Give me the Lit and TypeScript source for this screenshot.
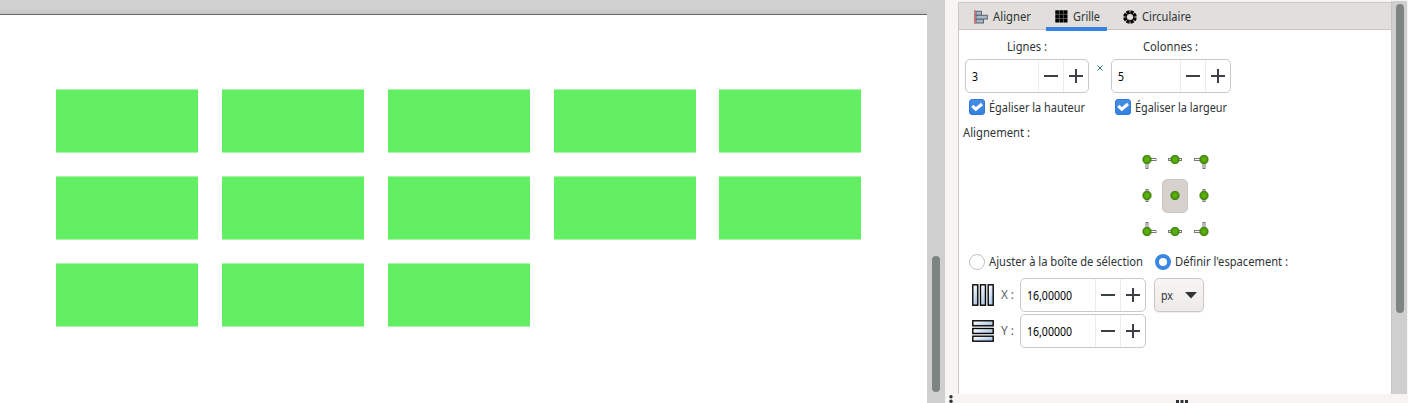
import { LitElement, html, svg, css } from "lit";
import { customElement, property } from "lit/decorators.js";

/** Condensed interface label fitted to a fixed advance width. */
@customElement("ui-label")
class UiLabel extends LitElement {
  @property() text = "";
  @property({ type: Number }) w = 40;
  static styles = css`
    :host { display: block; flex: none; color: #2e3436; }
    svg { display: block; height: 18px; overflow: visible; }
    text { font: 12px "Noto Sans", "Open Sans", sans-serif; fill: currentColor; }
  `;
  render() {
    return html`<svg width=${this.w} height="18">
      <text x="0" y="13" textLength=${this.w} lengthAdjust="spacingAndGlyphs">${this.text}</text>
    </svg>`;
  }
}

@customElement("spin-button")
class SpinButton extends LitElement {
  @property() value = "";
  @property({ type: Number }) w = 6;
  static styles = css`
    :host { display: flex; box-sizing: border-box; height: 34px; border: 1px solid #cdc7c2; border-radius: 5px; background: #fff; flex: none; }
    .value { flex: 1; padding: 8px 0 0 6px; }
    .value ui-label { color: #000; }
    .step { width: 24px; border-left: 1px solid #edebe9; display: flex; }
    svg { display: block; margin: 9px 0 0 5px; }
    path { fill: #3b4143; }
  `;
  render() {
    return html`
      <div class="value"><ui-label .text=${this.value} .w=${this.w}></ui-label></div>
      <div class="step"><svg width="14" height="14"><path d="M0 6h14v2H0z" /></svg></div>
      <div class="step"><svg width="14" height="14"><path d="M0 6h6V0h2v6h6v2H8v6H6V8H0z" /></svg></div>
    `;
  }
}

@customElement("shape-canvas")
class ShapeCanvas extends LitElement {
  static styles = css`
    :host { display: flex; flex-direction: column; width: 927px; height: 403px; background: #fff; }
    .ruler { box-sizing: border-box; height: 15px; background: linear-gradient(#d1d1d1 60%, #c6c6c6); border-bottom: 1px solid #666; }
    .shapes { display: grid; grid-template-columns: repeat(5, 142px); grid-auto-rows: 64px; gap: 23px 23.86px; padding: 74px 0 0 56px; }
    .shape { box-sizing: border-box; background: #63ef63; border: solid #a6f6a6; border-width: 1px 0; }
  `;
  render() {
    return html`<div class="ruler"></div>
      <div class="shapes">${Array.from({ length: 13 }, () => html`<div class="shape"></div>`)}</div>`;
  }
}

const check = html`<svg class="check" width="16" height="16" viewBox="0 0 16 16">
  <defs><linearGradient id="c" x2="0" y2="1"><stop stop-color="#478fe6" /><stop offset="1" stop-color="#3280e0" /></linearGradient></defs>
  <rect x=".5" y=".5" width="15" height="15" rx="2.5" fill="url(#c)" stroke="#2f7ad8" />
  <path d="M3.3 6.8 6.8 10.2 13 5" fill="none" stroke="#fff" stroke-width="3.1" />
</svg>`;

const alignIcon = html`<svg width="14" height="14" viewBox="0 0 14 14">
  <path d="M.8 0v14" stroke="#e06064" stroke-width="1.3" />
  <rect x="2" y="1.3" width="5.5" height="4" fill="#a4b6cc" stroke="#5d656e" />
  <rect x="2" y="9" width="7.5" height="4" fill="#a4b6cc" stroke="#5d656e" />
  <rect x="2" y="5.3" width="11.3" height="3.7" fill="#a9b9cb" stroke="#5d656e" />
</svg>`;

const gridIcon = html`<svg width="13" height="13" viewBox="0 0 13 13">
  <rect x=".3" y=".3" width="12.2" height="12.2" fill="#555" />
  ${[0.5, 4.8, 9].map((y) => [0.5, 4.8, 9].map((x) => svg`<rect x=${x} y=${y} width="3.3" height="3.3" fill="#000"/>`))}
</svg>`;

const circleIcon = html`<svg width="14" height="14" viewBox="0 0 14 14">
  ${[0, 45, 90, 135, 180, 225, 270, 315].map(
    (a) => svg`<path d="M5 .5Q7 -.1 9 .5L8.3 3.9H5.7Z" fill="#080808" transform=${`rotate(${a + 22.5} 7 7)`}/>`
  )}
</svg>`;

/** Anchor handle; each arm points towards the object it pins. */
const anchor = (dx: number[], dy: number[], active = false) => html`<div class=${active ? "anchor active" : "anchor"}>
  <svg width="26" height="34" viewBox="0 0 26 34">
    <defs><radialGradient id="g"><stop stop-color="#62b314" /><stop offset=".6" stop-color="#55a70c" /><stop offset="1" stop-color="#3c8500" /></radialGradient></defs>
    ${dx.map((d) => svg`<rect x=${d === -2 ? 3.5 : d === -1 ? 6.5 : 13.5} y="15.5" width=${Math.abs(d) === 2 ? 8.5 : 6} height="2" fill="#fff" stroke="#777"/>`)}
    ${dy.map((d) => svg`<rect x="12" y=${d === -2 ? 7.5 : d === -1 ? 10.5 : 16.5} width="2" height=${Math.abs(d) === 2 ? 9 : 6} fill="#fff" stroke="#777"/>`)}
    <circle cx="13" cy="16.5" r="4.1" fill="url(#g)" stroke="#387c05" stroke-width=".9" />
  </svg></div>`;

const bars = (rows: boolean) => html`<svg width="22" height="22" viewBox="0 0 22 22">
  <defs><linearGradient id="b" x2="1" y2="1"><stop offset=".15" stop-color="#fff" /><stop offset="1" stop-color="#8fb4dc" /></linearGradient></defs>
  ${[0, 7.7, 15.4].map((p) => rows
    ? svg`<rect x=".8" y=${p + 0.8} width="20.4" height="5" fill="url(#b)" stroke="#050505" stroke-width="1.4"/>`
    : svg`<rect x=${p + 0.8} y=".8" width="5" height="20.4" fill="url(#b)" stroke="#050505" stroke-width="1.4"/>`)}
</svg>`;

@customElement("app-root")
class AppRoot extends LitElement {
  static styles = css`
    * { box-sizing: border-box; }
    :host { display: flex; width: 1408px; height: 403px; overflow: hidden; background: #f6f5f4; }
    svg { display: block; flex: none; }
    .track { width: 18px; background: #cfcfcf; padding: 256px 0 0 5px; }
    .thumb { width: 8px; border-radius: 4px; background: #7f8383; }
    .track .thumb { height: 136px; }
    .gutter { width: 13px; padding: 395px 0 0 4px; }
    .side { width: 450px; display: flex; flex-direction: column; }
    .upper { display: flex; height: 394px; }
    .panel { width: 433px; height: 392px; margin-top: 2px; background: #fff; border: solid #cdc7c2; border-width: 1px 0 0 1px; }
    .scroll { width: 16px; height: 393px; margin-top: 1px; background: #cfcfcf; border-left: 1px solid #c9c4bf; padding: 3px 0 0 4px; }
    .scroll .thumb { height: 309px; }
    .grip { padding: 6px 0 0 218px; }
    .tabs { display: flex; height: 27px; background: #e1dedb; border-bottom: 1px solid #cdc7c2; padding-left: 10px; }
    .tab { display: flex; height: 28px; padding: 7px 5px 0; }
    .tab ui-label { margin: -2px 0 0 5px; }
    .tab.on { width: 61px; margin-left: 10px; padding-left: 9px; border-bottom: 4px solid #3584e4; }
    .tab.on + .tab { margin-left: 11px; }
    .row { display: flex; }
    .heads { height: 29px; padding: 8px 0 0 48px; }
    .heads ui-label + ui-label { margin-left: 96px; }
    .spins { padding-left: 6px; }
    .spins .first { width: 124px; }
    .spins .last { width: 120px; }
    .times { width: 22px; padding: 6px 0 0 8px; }
    .checks { padding: 6px 0 0 10px; height: 31px; }
    .checks ui-label { margin: 0 0 0 4px; }
    .second { margin-left: 30px; }
    .align { padding: 0 0 0 4px; height: 19px; }
    .anchors { display: grid; grid-template-columns: repeat(3, 26px); grid-auto-rows: 34px; gap: 2px 2.5px; padding: 0 0 0 174.5px; height: 107px; }
    .anchor { border-radius: 5px; }
    .active { background: #d6d1cd; border: 1px solid #cdc7c2; }
    .active svg { margin: -1px; }
    .radios { padding: 4px 0 0 10px; height: 28px; }
    .radio { width: 16px; height: 16px; border: 1px solid #c4beb9; border-radius: 8px; background: #fff; flex: none; }
    .radio.on { border: 4px solid #3b87e5; margin-left: 12px; }
    .radios ui-label { margin: -1px 0 0 4px; }
    .gap { height: 36px; padding-left: 13px; }
    .gap > svg { margin: 6px 7px 0 0; }
    .gap > ui-label { width: 19px; margin-top: 8px; color: #5c6264; }
    .gap spin-button { width: 126px; }
    .unit { display: flex; width: 50px; height: 34px; margin-left: 8px; border: 1px solid #cdc7c2; border-radius: 5px; background: linear-gradient(#f7f6f5, #edebe9); box-shadow: 0 1px 1px #0001; padding: 8px 0 0 6px; }
    .unit svg { margin: 5px 0 0 12px; }
  `;
  render() {
    const label = (text: string, w: number) => html`<ui-label .text=${text} .w=${w}></ui-label>`;
    return html`
      <shape-canvas></shape-canvas>
      <div class="track"><div class="thumb"></div></div>
      <div class="gutter"><svg width="4" height="8"><circle cx="2" cy="1.8" r="1.7" fill="#2e3436" /><circle cx="2" cy="6.3" r="1.7" fill="#2e3436" /></svg></div>
      <div class="side">
        <div class="upper">
          <div class="panel">
            <div class="tabs">
              <div class="tab">${alignIcon}${label("Aligner", 38)}</div>
              <div class="tab on">${gridIcon}${label("Grille", 27)}</div>
              <div class="tab">${circleIcon}${label("Circulaire", 49)}</div>
            </div>
            <div class="row heads">${label("Lignes :", 40)}${label("Colonnes :", 55)}</div>
            <div class="row spins">
              <spin-button class="first" value="3" .w=${6}></spin-button>
              <div class="times"><svg width="6" height="6"><path d="M.5 .5l5 5m0-5l-5 5" stroke="#3d7068" /></svg></div>
              <spin-button class="last" value="5" .w=${6}></spin-button>
            </div>
            <div class="row checks">${check}${label("Égaliser la hauteur", 96)}<div class="row second">${check}${label("Égaliser la largeur", 92)}</div></div>
            <div class="align">${label("Alignement :", 67)}</div>
            <div class="anchors">
              ${anchor([2], [2])}${anchor([-1, 1], [])}${anchor([-2], [2])}
              ${anchor([], [-1, 1])}${anchor([], [], true)}${anchor([], [-1, 1])}
              ${anchor([2], [-2])}${anchor([-1, 1], [])}${anchor([-2], [-2])}
            </div>
            <div class="row radios"><div class="radio"></div>${label("Ajuster à la boîte de sélection", 154)}<div class="radio on"></div>${label("Définir l'espacement :", 113)}</div>
            <div class="row gap">${bars(false)}${label("X :", 13)}<spin-button value="16,00000" .w=${45}></spin-button>
              <div class="unit">${label("px", 12)}<svg width="12" height="7"><path d="M0 0h12L6 6.5z" fill="#2e3436" /></svg></div></div>
            <div class="row gap">${bars(true)}${label("Y :", 13)}<spin-button value="16,00000" .w=${45}></spin-button></div>
          </div>
          <div class="scroll"><div class="thumb"></div></div>
        </div>
        <div class="grip"><svg width="13" height="3"><path d="M0 0h3v3H0zM4.5 0h3v3h-3zM9 0h3v3H9z" fill="#2e3436" /></svg></div>
      </div>`;
  }
}
